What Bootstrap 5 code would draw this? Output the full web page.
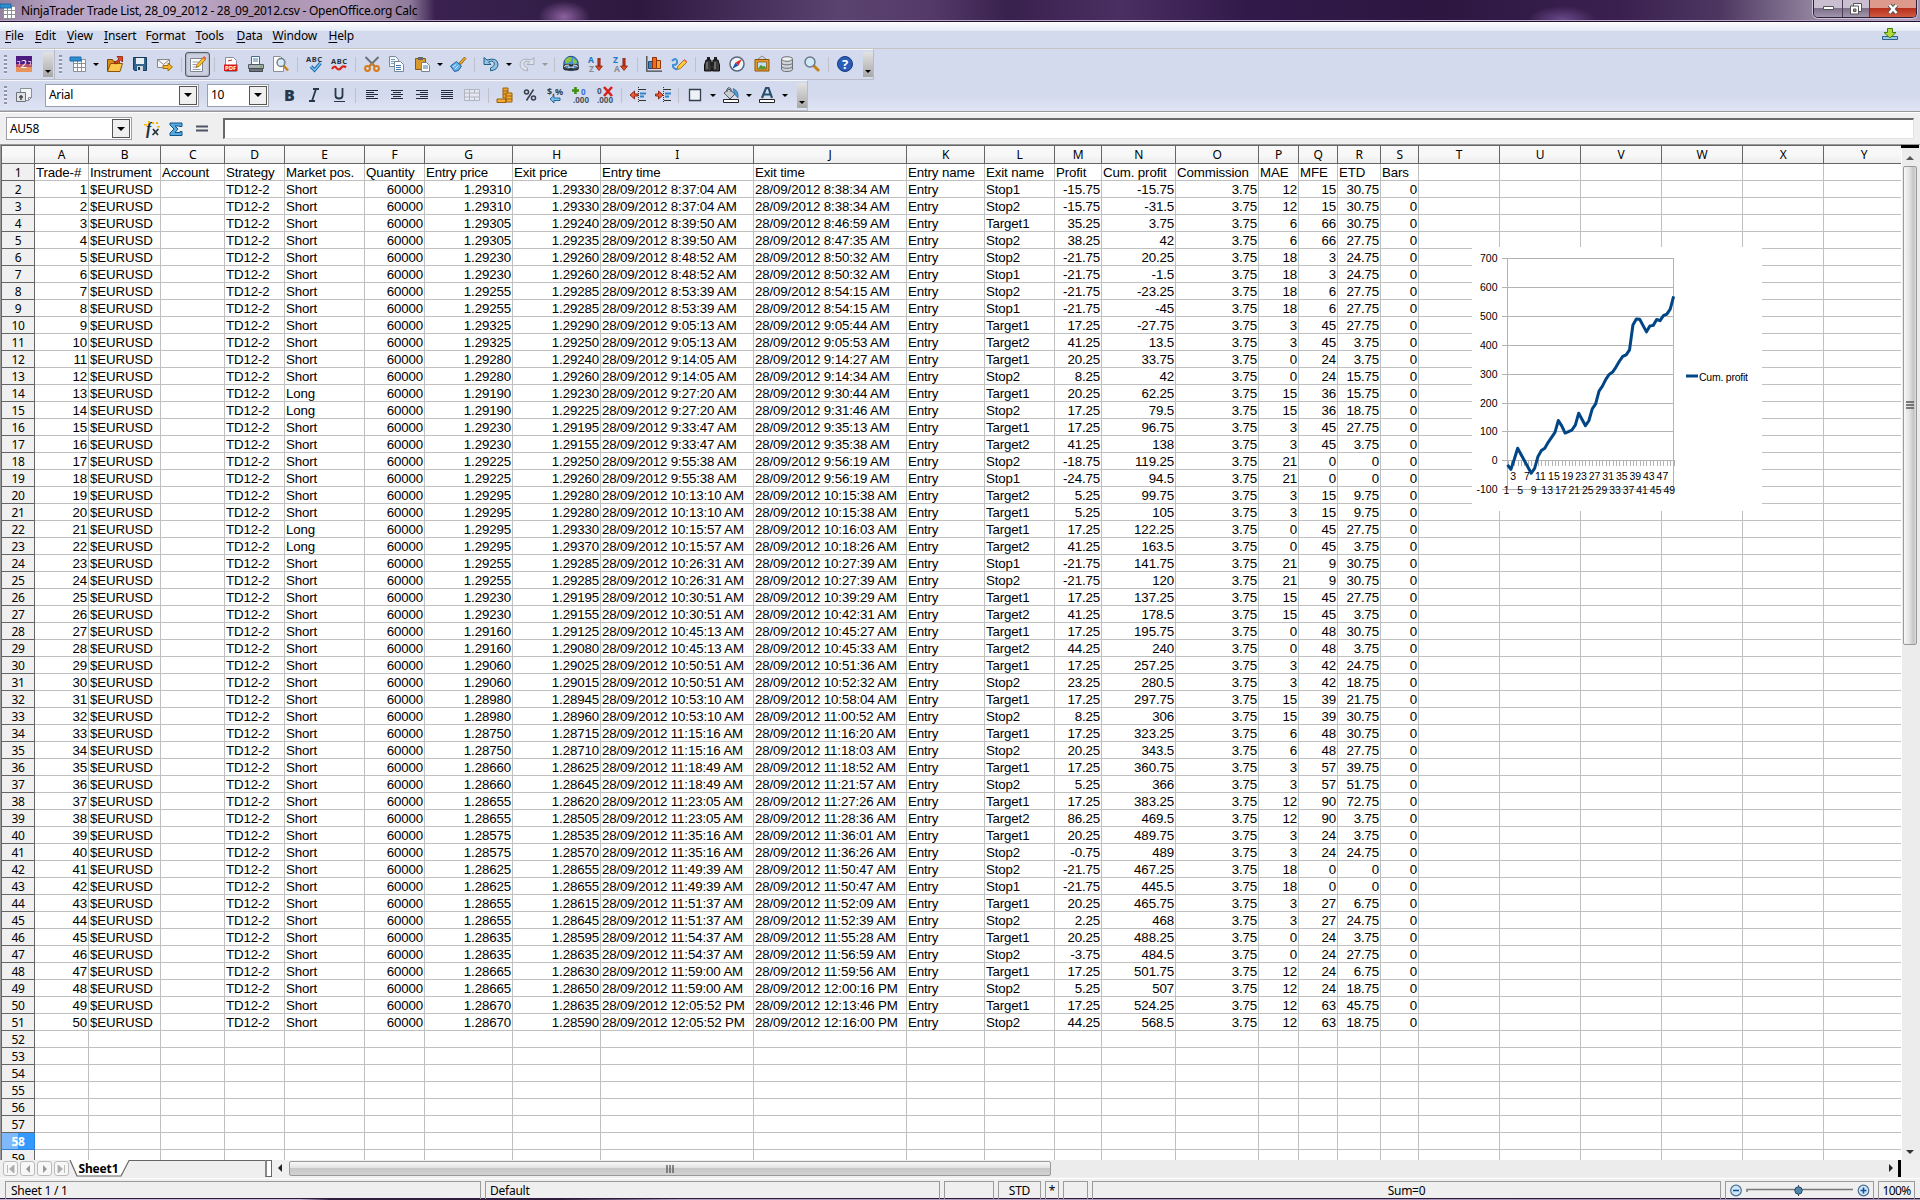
<!DOCTYPE html>
<html lang="en">
<head>
<meta charset="utf-8">
<title>NinjaTrader Trade List, 28_09_2012 - 28_09_2012.csv - OpenOffice.org Calc</title>
<link href="https://cdn.jsdelivr.net/npm/bootstrap@5.3.0/dist/css/bootstrap.min.css" rel="stylesheet">
<style>
html,body{height:1200px;overflow:hidden}
body{font:12px/16px "Noto Sans","Open Sans",sans-serif;color:#000;background:#efefef;width:1920px}
svg{display:block;overflow:visible}
.titlebar{height:22px;background:radial-gradient(ellipse 26px 16px at 564px 17px,#8d62a0,#8d62a000),radial-gradient(ellipse 34px 14px at 1562px 20px,#6a4a8c,#6a4a8c00),linear-gradient(90deg,#94809f 0,#b7a3c5 60px,#c3b0cb 170px,#a78fae 260px,#b79fbf 340px,#8f7a9a 410px,#3a2150 435px,#35204a 520px,#2e183f 640px,#5b4370 840px,#533a69 930px,#39214e 1010px,#4a2f62 1120px,#31194a 1250px,#2d1740 1440px,#3a2050 1620px,#4d3760 1720px,#8f809c 1810px,#b7a6c4 1910px,#a392b0 1920px);border-bottom:1px solid #1e1030;box-shadow:inset 0 -1px 0 #b9a4c8}
.titlebar .caption{letter-spacing:-.26px;line-height:21px;margin-left:5px}
.winbtns{width:104px;height:18px;border:1px solid #2c2038;border-top:0;border-radius:0 0 5px 5px;overflow:hidden;margin-right:3px;box-shadow:0 0 0 1px #cfc3d8}
.wb{height:17px;background:linear-gradient(#c9bfd0 0 50%,#7d7088 50%,#a397b0);border-right:1px solid #4b3d58}
.wb svg{margin:auto}
.wb-close{background:linear-gradient(#dd9a8c 0 50%,#b8301c 50%,#d05a40);border:0}
.menubar{height:27px;background:linear-gradient(#fff 0,#eef2fa 5px,#e5ebf6 9px,#d4daed 9px);border-bottom:1px solid #c4c4c4}
.menubar span{line-height:28px;white-space:nowrap;letter-spacing:-.15px}
.menubar u{text-underline-offset:1.5px}
.bars{height:62px;background:linear-gradient(#d4daed 0,#d4daed 46px,#dfe5f5)}
.tbar{height:31px;border-right:1px solid #b9bcc8;border-bottom:1px solid #b9bcc8;border-top:1px solid #f3f5fb;width:max-content;padding-bottom:1px}
.tbar .ic{width:25px;height:25px;display:flex;align-items:center;justify-content:center;flex:none}
.ic svg{width:16px;height:16px}
.ar{width:11px;flex:none;display:flex;justify-content:center}
.ar:before,.dn:before{content:"";border:3px solid transparent;border-top:3px solid #000;border-bottom:0}
.ar.off:before{border-top-color:#999}
.sp{width:8px;flex:none;display:flex;justify-content:center}
.sp:before{content:"";width:1px;height:15px;background:#bfc0c8}
.hd{width:3px;height:19px;background:repeating-linear-gradient(#8e93a5 0 2px,#e6eaf6 2px 4px);flex:none}
.more{width:10px;height:25px;background:linear-gradient(#e2e2e2,#a8a8a8);display:flex;align-items:flex-end;justify-content:center;padding-bottom:4px;flex:none}
.on{border:1px solid #555b66;border-radius:3px;background:#ccd1e2;box-shadow:inset 0 0 2px #777}
.combo{height:23px;border:1px solid #9c9fa8;background:#fff;display:flex;align-items:center;justify-content:space-between;padding:1px 1px 1px 3px;flex:none;letter-spacing:-.3px}
.combo .dn{width:18px;height:19px;border:1px solid #555;background:#efefef;display:flex;align-items:center;justify-content:center}
.combo .dn:before{border-width:4px 4px 0 4px}
.more:before{content:"";border:3px solid transparent;border-top:3px solid #000;border-bottom:0}
.fbar{height:34px;padding-top:1px;border-top:1px solid #999;box-shadow:inset 0 1px 0 #fff;border-bottom:1px solid #999}
.finput{height:21px;background:#fff;border:1px solid #e3e3e3;border-top:2px solid #696969;border-left:2px solid #696969;width:1691px}
.work{height:1015px}
.gridbox{width:1901px;height:1015px;overflow:hidden;position:relative;background:#fff;border-left:1px solid #999}
.sheet{table-layout:fixed;border-collapse:separate;border-spacing:0;font:13.3px/16px "Liberation Sans",Arial,sans-serif;letter-spacing:-.13px}
.sheet td,.sheet th{height:17px;padding:0 2px 0 1px;border-right:1px solid #c0c0c0;border-bottom:1px solid #c0c0c0;overflow:hidden;white-space:nowrap;font-weight:400}
.sheet td{padding-top:1px;line-height:15px}
.sheet .n{text-align:right;padding-right:1px}
.sheet th{font:12px/15px "Noto Sans","Open Sans",sans-serif;letter-spacing:-.4px;text-align:center;border-color:#666;background:#f0f0f0;padding:0}
.sheet thead th{height:19px;line-height:17px;border-top:1px solid #666;background:linear-gradient(#f8f8f8 0 50%,#ededed)}
.sheet th:first-child{border-left:1px solid #666}
.sheet th.cur{background:linear-gradient(90deg,#7db9fb 50%,#3399ff 50%);color:#fff;font-weight:700;border-color:#2a82dd}
.chart{position:absolute;left:1471px;top:102px;width:290px;height:264px;background:#fff}
.vs{width:19px;background:#ececec;border-left:1px solid #fff}
.vthumb{margin-left:1px;width:14px;height:479px;border:1px solid #999;border-radius:2px;background:linear-gradient(90deg,#f8f8f8,#dedede 50%,#c4c4c8 80%,#ddd)}
.tabs{height:18px}
.nv{width:15px;height:15px;border:1px solid #bbb;border-radius:3px;background:#f7f7f7;flex:none;margin:1px 2px 0 0;display:flex;align-items:center;justify-content:center}
.hthumb{width:762px;height:15px;margin-top:1px;border:1px solid #999;border-radius:2px;background:linear-gradient(#f8f8f8,#e2e2e2 45%,#c8c8c8 50%,#d2d2d2)}
.status{height:20px;border-top:1px solid #fff;padding:2px 0 0 5px}
.pane{height:18px;border:1px solid #9a9a9a;border-bottom:0;line-height:18px;padding-left:5px;flex:none;letter-spacing:-.25px;white-space:nowrap}
.strip{height:2px;border-top:1px solid #2d1c3d;background:linear-gradient(90deg,#c9b2d6 300px,#33203f 330px,#30203c 560px,#b39cc0 680px,#a591b3)}
</style>
<script src="https://cdn.jsdelivr.net/npm/bootstrap@5.3.0/dist/js/bootstrap.bundle.min.js"></script>
</head>
<body>
<svg width="0" height="0" class="position-absolute"><defs>
<g id="gridic"><path d="M3.500 3.500h12v12h-12z" fill="#fff" stroke="#8b9196"/><path d="M3 7.500h13M3 11.500h13M7.500 3v13M11.500 3v13" stroke="#8b9196"/><path d="M0 1h11v4H0z" fill="#2e8fd0" stroke="#1c6ba6"/></g>
<g id="page"><path d="M2.500 1.500h8l3 3v11h-11z" fill="#fff" stroke="#8a8f98"/></g>
<g id="down"><path d="M0 0v9" stroke="#7c1508" stroke-width="3"/><path d="M0 0v9" stroke="#e04a20"/><path d="M-3.500 8h7L0 12.500z" fill="#e04a20" stroke="#8c1c08" stroke-width=".8"/></g>
</defs></svg>

<div class="titlebar d-flex align-items-start">
  <svg width="16" height="16" viewBox="0 0 16 16" style="margin-top:3px"><use href="#gridic"/></svg>
  <span class="caption">NinjaTrader Trade List, 28_09_2012 - 28_09_2012.csv - OpenOffice.org Calc</span>
  <div class="winbtns d-flex ms-auto">
    <div class="wb d-flex" style="width:29px"><svg width="11" height="5"><path d="M.5.500h10v3H.5z" fill="#fff" stroke="#555"/></svg></div>
    <div class="wb d-flex" style="width:27px"><svg width="12" height="12"><path d="M3.500.5h8v8h-8z" fill="#fff" stroke="#555"/><path d="M.5 3h8v8h-8z" fill="#fff" stroke="#555"/><path d="M3.500 6h2.500v2.500H3.500z" fill="#998da5" stroke="#555"/></svg></div>
    <div class="wb wb-close d-flex flex-fill"><svg width="12" height="10"><path d="M2.500 1l7 8M9.500 1l-7 8" stroke="#555" stroke-width="4.500"/><path d="M2.500 1l7 8M9.500 1l-7 8" stroke="#fff" stroke-width="2.600"/></svg></div>
  </div>
</div>
<div class="menubar d-flex ps-1" id="menu"></div>
<div class="bars">
  <div class="d-flex">
  <div class="tbar d-flex align-items-center" style="width:55px">
    <i class="hd ms-1"></i>
    <span class="ic" style="margin-left:4px"><svg viewBox="0 0 16 16"><path d="M0 0h16v16H0z" fill="#4c1a80"/><path d="M0 11h16v5H0z" fill="#e8935a"/><path d="M0 8h16v3H0z" fill="#b8506c"/><text x="8" y="12" font-size="11" fill="#fff" text-anchor="middle">2</text><path d="M1 5.500h3l-1 4M12 5.500h3l-1 4" fill="none" stroke="#e9d8f2" stroke-width=".8"/></svg></span>
    <i class="more" style="margin-left:7px"></i>
  </div>
  <div class="tbar d-flex align-items-center" id="std"></div>
  </div>
  <div class="tbar d-flex align-items-center" id="fmt"></div>
</div>
<div class="fbar d-flex align-items-center">
  <div class="combo" style="width:126px;margin-left:6px">AU58<i class="dn"></i></div>
  <svg width="16" height="16" viewBox="0 0 16 16" style="margin-left:12px"><text x="2" y="13" font-family="Liberation Serif" font-style="italic" font-weight="700" font-size="16" fill="#26303c">f</text><path d="M9 8l5 6M14.500 8l-6 6" stroke="#26303c" stroke-width="1.700"/><g fill="#f5b800"><path d="M0 3h3v1.500H0zM4 0h2v2H4zM8 1h2v2H8zM12 1h2v2h-2zM13 5h3v1.500h-3z"/></g></svg>
  <svg width="16" height="16" viewBox="0 0 16 16" style="margin-left:8px"><path d="M2 2h12v3.500h-2.500V5H7l3 3-3 3.500h5V10.500H14V14.500H2V12l4-4-4-4z" fill="#55aadf" stroke="#12538c"/></svg>
  <svg width="12" height="8" style="margin-left:12px"><path d="M0 1.500h12M0 5.500h12" stroke="#4c5663" stroke-width="2"/></svg>
  <div class="finput" style="margin-left:15px"></div>
</div>
<div class="work d-flex">
  <div class="gridbox">
    <table class="sheet"><colgroup id="cg"></colgroup><thead><tr id="hdr"></tr></thead><tbody id="rows"></tbody></table>
    <svg class="chart" id="chart" viewBox="1472 247 290 264" font-family="Liberation Sans" font-size="10.500"></svg>
  </div>
  <div class="vs">
    <div style="height:3px;width:18px;background:#000;margin-left:-1px"></div>
    <svg width="14" height="18"><path d="M4 12h8l-4-4z" fill="#555"/></svg>
    <div class="vthumb d-flex align-items-center justify-content-center"><svg width="8" height="9"><path d="M0 1h8M0 4h8M0 7h8" stroke="#555" stroke-width="1.500"/></svg></div>
    <svg width="14" height="515"><path d="M4 505h8l-4 4z" fill="#333"/></svg>
  </div>
</div>
<div class="tabs d-flex" style="padding-left:3px">
  <i class="nv"><svg width="9" height="8"><path d="M1.500 0v8M8 0v8L3.500 4z" fill="#aaa" stroke="#aaa" stroke-width=".8"/></svg></i>
  <i class="nv"><svg width="6" height="8"><path d="M5 0v8L1 4z" fill="#999"/></svg></i>
  <i class="nv"><svg width="6" height="8"><path d="M1 0v8l4-4z" fill="#999"/></svg></i>
  <i class="nv"><svg width="9" height="8"><path d="M7.500 0v8M1 0v8l4.500-4z" fill="#aaa" stroke="#aaa" stroke-width=".8"/></svg></i>
  <svg width="195" height="17" style="margin-left:-1px;flex:none"><path d="M0 0l7 16h44L59 0z" fill="#fff"/><path d="M0 0l7 16h44L59 .5h136" fill="none" stroke="#666" stroke-width="1.200"/><text x="8.500" y="13" font-family="Noto Sans" font-weight="700" font-size="12" textLength="40">Sheet1</text></svg>
  <div style="width:7px;height:17px;border:1px solid #666;border-left:2px solid #888;background:#fff"></div>
  <svg width="17" height="16"><path d="M10 4v8l-4-4z" fill="#222"/></svg>
  <div class="hthumb d-flex align-items-center justify-content-center"><svg width="8" height="8"><path d="M1 0v8M4 0v8M7 0v8" stroke="#555" stroke-width="1.300"/></svg></div>
  <div class="flex-fill" style="background:#ececec;height:17px"></div>
  <svg width="12" height="16" style="background:#ececec"><path d="M2 4v8l4-4z" fill="#222"/></svg>
  <div style="width:3px;height:17px;background:#000;margin:0 19px 0 -1px"></div>
</div>
<div class="status d-flex">
  <div class="pane" style="width:476px;margin-right:4px">Sheet 1 / 1</div>
  <div class="pane" style="width:455px;margin-right:4px;padding-left:4px">Default</div>
  <div class="pane" style="width:50px;margin-right:4px"></div>
  <div class="pane text-center p-0" style="width:43px;margin-right:4px">STD</div>
  <div class="pane text-center p-0" style="width:14px;margin-right:4px">*</div>
  <div class="pane" style="width:25px;margin-right:4px"></div>
  <div class="pane text-center p-0" style="width:629px;margin-right:4px">Sum=0</div>
  <div class="pane p-0" style="width:149px;margin-right:4px"><svg width="147" height="17"><g stroke="#4d6f91" stroke-width="1.200"><circle cx="10" cy="8.500" r="5.300" fill="#cfe6fa"/><circle cx="137.500" cy="8.500" r="5.300" fill="#cfe6fa"/></g><path d="M7 8.500h6M134.500 8.500h6M137.500 5.500v6" stroke="#0f4f94" stroke-width="1.600"/><path d="M21 10V7.500h106" fill="none" stroke="#777" stroke-width="1.500"/><path d="M72.500 3v11" stroke="#444"/><circle cx="72.500" cy="8.500" r="3.700" fill="#4f86ad" stroke="#27465e"/></svg></div>
  <div class="pane text-center p-0" style="width:37px;letter-spacing:-.6px">100%</div>
</div>
<div class="strip"></div>

<script>
const $=id=>document.getElementById(id);
/* menu: label and the box width up to the next entry */
$('menu').innerHTML=[['<u>F</u>ile',30],['<u>E</u>dit',32],['<u>V</u>iew',37],['<u>I</u>nsert',41.5],['F<u>o</u>rmat',50],['<u>T</u>ools',41],['<u>D</u>ata',36],['<u>W</u>indow',56],['<u>H</u>elp',40]]
 .map(([t,w])=>`<span style="width:${w}px;padding-left:1px">${t}</span>`).join('')+
 '<svg width="16" height="13" style="margin:6px 22px 0 auto"><path d="M.5 8.500h15v3H.5z" fill="#9cc8e8" stroke="#2e6187"/><path d="M5.500.5h5v4h3.500L8 10 2 4.500h3.500z" fill="#b4d838" stroke="#3f7f10"/></svg>';

const clip='<path d="M1.500 2.500h10v11h-10z" fill="#d99a2b" stroke="#8a5a10"/><path d="M4 1h5v3H4z" fill="#666"/><path d="M7.500 6.500h5l3 3v6h-8z" fill="#fff" stroke="#7a828c"/><path d="M9 10h5M9 12h5" stroke="#3b78b5"/>';
const sortIc=(a,b,c1,c2)=>`<text x="0" y="7" font-size="8.500" font-weight="700" fill="${c1}">${a}</text><text x="1" y="16" font-size="8.500" font-weight="700" fill="${c2}">${b}</text><use href="#down" x="11" y="2"/>`;
const I={
 new:'<use href="#gridic"/>',
 open:'<path d="M.5 15V3.500h5l1 2h6V8" fill="#d98e1c" stroke="#7c4a06"/><path d="M.5 15.500l3-8h12l-2.500 8z" fill="#fcc94e" stroke="#8a5608"/><path d="M7 7l5-4-2-2.500h5.500V6L13.500 4 9 8z" fill="#e4481e" stroke="#8e1c06" stroke-width=".8"/>',
 save:'<path d="M1.500 1.500h13v13h-12l-1-1z" fill="#33658f" stroke="#173a59"/><path d="M4 2h8v6H4z" fill="#e8eef4"/><path d="M5 10h6v5H5z" fill="#cfd8e0"/><path d="M6 11h2v3H6z" fill="#173a59"/>',
 mail:'<path d="M.5 3.500h12v8H.5z" fill="#f4f4f4" stroke="#888"/><path d="M.5 3.500l6 5 6-5" fill="none" stroke="#888"/><path d="M6 9.500h5V7l4.500 4-4.500 4v-2.500H6z" fill="#f5b52a" stroke="#9a6208" stroke-width=".9"/>',
 edit:'<path d="M.5 2.500h12v13H.5z" fill="#fff" stroke="#7d8690"/><path d="M2.500 6h6M2.500 8.500h4M2.500 11h4M2.500 13.500h8" stroke="#8aa0b4"/><path d="M6 11.500l1-3 6-7 2.500 2-6.500 7z" fill="#fbc02d" stroke="#8f5f0a" stroke-width=".8"/><path d="M12.500 1.500l1.500-1.500 2.500 2-1.500 1.800z" fill="#e65b5b"/>',
 pdf:'<use href="#page"/><path d="M1 8.500h13.500V15H1z" fill="#d8171b"/><text x="2" y="14.300" font-size="6" font-weight="700" fill="#fff">PDF</text><path d="M5 5l4-1" stroke="#d8171b"/>',
 print:'<path d="M3.500.5h8v8h-8z" fill="#fff" stroke="#44698c"/><path d="M5 3h5M5 5h5" stroke="#3d7fbb"/><path d="M.5 8.500h15v4H.5z" fill="#aab0b6" stroke="#555b62"/><path d="M1.500 12.500h13v3h-13z" fill="#6d747c" stroke="#44494f"/><path d="M12 10.500h2" stroke="#54c51c" stroke-width="1.500"/>',
 preview:'<path d="M.5.5h7l3 3v12H.5z" fill="#fff" stroke="#8a8f98"/><path d="M10 9l5 5.500" stroke="#c48618" stroke-width="2.500"/><circle cx="8" cy="6.500" r="4" fill="#cfe6f7cc" stroke="#6b7782" stroke-width="1.300"/>',
 spell:'<text x="0" y="6" font-size="7.500" font-weight="700" fill="#26313c" textLength="16">ABC</text><path d="M5 10.500l3.500 3.500 6-7" fill="none" stroke="#1660a4" stroke-width="3.400"/><path d="M5 10.500l3.500 3.500 6-7" fill="none" stroke="#6bc0f4" stroke-width="1.600"/>',
 auto:'<text x="0" y="8" font-size="7.500" font-weight="700" fill="#26313c" textLength="16">ABC</text><path d="M1 13q2.500-4 4.500-1t4.500 0 5-.5" fill="none" stroke="#dc2217" stroke-width="2.200"/>',
 cut:'<path d="M1.500 1l9 9M14.500 1l-9 9" stroke="#6a7179" stroke-width="2"/><circle cx="3.500" cy="12.500" r="2.400" fill="none" stroke="#d97a12" stroke-width="2"/><circle cx="12.500" cy="12.500" r="2.400" fill="none" stroke="#d97a12" stroke-width="2"/><path d="M6 9l2-1 2 1" stroke="#d97a12" stroke-width="2" fill="none"/>',
 copy:'<path d="M.5.500h6l3 3v7h-9z" fill="#f4f7fa" stroke="#7a8796"/><path d="M2 3.500h4M2 5.500h4M2 7.500h4" stroke="#6ea0d0"/><path d="M5.500 5.500h6l3 3v7h-9z" fill="#fff" stroke="#7a8796"/><path d="M7 9.500h5M7 11.500h5M7 13.500h5" stroke="#3b78b5"/>',
 paste:clip,
 brush:'<path d="M9 7l5.500-6 1.500 1.500L11 8.500z" fill="#e9a826" stroke="#8a5a10" stroke-width=".8"/><path d="M.5 10l6-4.500 5 4.500-3 4.500-4 1z" fill="#63b0ea" stroke="#215f97"/><path d="M3 11l3-2.500M5 13l3-3" stroke="#d5ecfb"/>',
 undo:'<path d="M1 1.500v7h7L5.500 6Q9.500 4 11 6.800T7.500 12v2.800Q15 14 15 8 14 1 4 4z" fill="#8fc4e2" stroke="#1f5e86"/>',
 redo:'<path d="M15 1.500v7H8L10.500 6Q6.500 4 5 6.800T8.500 12v2.800Q1 14 1 8 2 1 12 4z" fill="#dde1ea" stroke="#a9afba"/>',
 link:'<circle cx="8" cy="7.500" r="7.200" fill="#4a90d0" stroke="#1d4d7c"/><path d="M2 4q3-4 7-2.500l-1 4-5 2zM10 2l4 3-1 3-3-1z" fill="#8cc43c"/><rect x="1" y="9" width="7" height="4.500" rx="2.200" fill="none" stroke="#333" stroke-width="2"/><rect x="8" y="9" width="7" height="4.500" rx="2.200" fill="none" stroke="#333" stroke-width="2"/><path d="M1.500 11.200q0-2 2.500-2h2M10 9.200h2q2.500 0 2.500 2M5 11.200h6" stroke="#eee" fill="none"/>',
 az:sortIc('A','Z','#1c77c3','#8a8f96'), za:sortIc('Z','A','#1c77c3','#8a8f96'),
 bar:'<path d="M.8 0v15.200H16" fill="none" stroke="#444" stroke-width="1.300"/><path d="M2.500 5.500h4v7h-4z" fill="#3f82b8" stroke="#1a4c76"/><path d="M6.500 1.500h4v11h-4z" fill="#f26a1c" stroke="#8f3205"/><path d="M10.500 4.500h4v8h-4z" fill="#f9a33b" stroke="#8f3205"/>',
 draw:'<path d="M1 5q4-4 5 0t-4 4q-1 3 4 4.500" fill="none" stroke="#3f8fd4" stroke-width="2"/><path d="M6 13.500l1-3.500 6-6 2.500 2.500-6 6z" fill="#fbca3c" stroke="#8f5f0a" stroke-width=".8"/><path d="M12.500 4l1-1 2.800 2.500-1 1z" fill="#e26a6a"/>',
 find:'<path d="M3 1h3v3H3zM10 1h3v3h-3z" fill="#222"/><path d="M2 4h5l.5 11H.5V9zM9 4h5l1.500 5v6H8.500z" fill="#3b3b3b" stroke="#111"/><path d="M6 6h4v4H6z" fill="#222"/><path d="M3 6v7M11 6v7" stroke="#999"/>',
 nav:'<circle cx="8" cy="8" r="7" fill="#eef5fb" stroke="#5a6a7a" stroke-width="1.500"/><path d="M13 3L6.500 6.500 9.500 9.500z" fill="#e32a1a"/><path d="M3 13l3.500-6.500 3 3z" fill="#2158b4"/>',
 gal:'<path d="M4 3l4-3 4 3" fill="none" stroke="#888"/><path d="M1 3.500h14v11.500H1z" fill="#e79a2c" stroke="#8a5208"/><path d="M3.500 6h9v7h-9z" fill="#bfe0f6" stroke="#7a5010" stroke-width=".7"/><path d="M4 12.700l3-4 2 2 1.500-1 2 3z" fill="#4d9424"/>',
 db:'<path d="M2.500 3v10q0 2.500 5.500 2.500t5.500-2.500V3" fill="#d0d4d8" stroke="#6c7278"/><ellipse cx="8" cy="3" rx="5.500" ry="2.300" fill="#eef0f2" stroke="#6c7278"/><path d="M2.500 6.500q0 2.300 5.500 2.300t5.500-2.300M2.500 10q0 2.300 5.500 2.300t5.500-2.300" fill="none" stroke="#6c7278"/>',
 zoom:'<path d="M9.500 9.500l5.500 5.500" stroke="#c7821a" stroke-width="3"/><circle cx="6" cy="6" r="5" fill="#cfe8fa" stroke="#6b7a88" stroke-width="1.500"/>',
 help:'<circle cx="8" cy="8" r="7.500" fill="#2a5db8" stroke="#123a80"/><text x="8" y="12.700" text-anchor="middle" font-size="13" font-weight="700" fill="#fff">?</text>',
 styles:'<path d="M4.500 1.500h11v9l-3 3h-8z" fill="#f2f4f6" stroke="#8a9098"/><path d="M.5 5.500h9v9h-9z" fill="#dfe3e8" stroke="#6d747c"/><path d="M3 10h4M5 8v5" stroke="#444" stroke-width="1.500"/><path d="M15.500 10.500h-3v3" fill="none" stroke="#8a9098"/>',
 b:'<text x="3" y="13.500" font-family="Open Sans" font-size="16" font-weight="800" fill="#26384a">B</text>',
 i:'<path d="M7 2h6M3 14h6M10 2L6 14" stroke="#26384a" stroke-width="1.800"/>',
 u:'<path d="M4.500 1v7.500q0 3 3.500 3t3.500-3V1" fill="none" stroke="#26384a" stroke-width="1.800"/><path d="M3 14.500h11" stroke="#26384a"/>',
 coin:'<path d="M6 1h5v10H6z" fill="#f0a730" stroke="#9a5f0a"/><path d="M9 6h6v9H9zM0 12h9v3.500H0z" fill="#f4ad35" stroke="#9a5f0a"/><path d="M6 4h5M6 7h3M9 9h6M9 12h6" stroke="#9a5f0a"/>',
 pct:'<g fill="none" stroke="#333f4b" stroke-width="1.500"><circle cx="4.500" cy="5" r="2"/><circle cx="11.500" cy="11" r="2"/><path d="M11.500 2.500L4.500 13.500"/></g>',
 std:'<text x="0" y="7.500" font-size="9" font-weight="700" fill="#333f4b" textLength="16">$,%</text><path d="M3 12l4-3.500V11h6v2.500H7V16z" fill="#7ac3ee" stroke="#1b5e92" stroke-width=".9"/>',
 add:'<path d="M0 3.500h7M3.500 0v7" stroke="#3f8f14" stroke-width="2.600"/><text x="9" y="8" font-size="8" font-weight="700" fill="#3a6fd8">0</text><text x="1" y="16" font-size="8" font-weight="700" fill="#4a5560">.000</text>',
 del:'<text x="0" y="7" font-size="8" font-weight="700" fill="#4a5560">0</text><text x="0" y="16" font-size="8" font-weight="700" fill="#4a5560">.000</text><path d="M7 0l8 9M15 0L7 9" stroke="#d8201a" stroke-width="2.600"/>',
 box:'<path d="M2.500 2.500h11v11h-11z" fill="#eef1f8" stroke="#333f4b" stroke-width="1.300"/>',
 fill:'<path d="M1 6l5-4 6 5-5 5z" fill="#c8ccd2" stroke="#4d555e"/><path d="M4 5V2q2-3 4 0v3" fill="none" stroke="#4d555e"/><path d="M10 1.500q6 2 5 9.500l-3.500-4z" fill="#4a9bd8" stroke="#1f5e86" stroke-width=".6"/><path d="M.5 12.500h15v3H.5z" fill="#fff" stroke="#222"/>',
 fc:'<path d="M3 11L7 1h2.500l3.500 10M5 7.500h6.500" fill="none" stroke="#26506e" stroke-width="2.200"/><path d="M.5 12.500h15v3H.5z" fill="#fff" stroke="#222"/>',
 merge:'<path d="M.5 2.500h15v11H.5z" fill="#e4e7f0" stroke="#b0b4c0"/><path d="M0 6h16M0 10h16M5.500 2v11M10.500 2v4M10.500 10v4" stroke="#b0b4c0"/>'
};
const al=(a)=>'<g stroke="#222c38" stroke-width="1">'+a.map(([x,w],k)=>`<path d="M${x} ${3.5+k*2}h${w}"/>`).join('')+'</g>';
I.al=al([[2,12],[2,8],[2,12],[2,8],[2,12]]);I.ac=al([[2,12],[4,8],[2,12],[4,8],[2,12]]);
I.arr=al([[2,12],[6,8],[2,12],[6,8],[2,12]]);I.aj=al([[2,12],[2,12],[2,12],[2,12],[2,12]]);
const ind=p=>`<path d="M8.500 0v16" stroke="#333" stroke-dasharray="1 1"/><path d="M9 2.500h7M9 13.500h7" stroke="#333"/><path d="M10 6.500h6M10 9.500h4" stroke="#2f86cc" stroke-width="2"/><path d="${p}" fill="#e8603a" stroke="#8c1c08" stroke-width=".9"/>`;
I.dec=ind('M0 8l4.500-4V7H8v2H4.500v3z');I.inc=ind('M8 8L3.500 4V7H.5v2h3v3z');
const bar=s=>s.split(' ').map(k=>k=='|'?'<i class="sp"></i>':k=='v'?'<i class="ar"></i>':k=='V'?'<i class="ar" style="width:12px"></i>':k=='x'?'<i class="ar off"></i>':`<span class="ic${k=='edit'?' on':''}"><svg viewBox="0 0 16 16">${I[k]}</svg></span>`).join('');
$('std').innerHTML='<i class="hd" style="margin-left:4px;margin-right:3px"></i>'+bar('new V open save mail | edit | pdf print preview | spell auto | cut copy paste v brush | undo v redo x | link az za | bar draw | find nav gal db zoom | help')+'<i class="more" style="margin-left:6px"></i>';
$('fmt').innerHTML='<i class="hd ms-1" style="margin-right:4px"></i>'+bar('styles')+'<div class="combo" style="width:154px;margin-left:9px">Arial<i class="dn"></i></div><div class="combo" style="width:62px;margin:0 7px 0 8px">10<i class="dn"></i></div>'+bar('b i u | al ac arr aj merge | coin pct std add del | dec inc')+'<i class="sp" style="width:7px"></i>'+bar('box v fill v fc v')+'<i class="more" style="margin-left:7px"></i>';

/* pos | entry px | exit px | entry time | exit time | exit name | profit | cum | MAE | MFE | ETD */
const raw=`S 310 330 8:37:04 8:38:34 Stop1 -15.75 -15.75 12 15 30.75
S 310 330 8:37:04 8:38:34 Stop2 -15.75 -31.5 12 15 30.75
S 305 240 8:39:50 8:46:59 Target1 35.25 3.75 6 66 30.75
S 305 235 8:39:50 8:47:35 Stop2 38.25 42 6 66 27.75
S 230 260 8:48:52 8:50:32 Stop2 -21.75 20.25 18 3 24.75
S 230 260 8:48:52 8:50:32 Stop1 -21.75 -1.5 18 3 24.75
S 255 285 8:53:39 8:54:15 Stop2 -21.75 -23.25 18 6 27.75
S 255 285 8:53:39 8:54:15 Stop1 -21.75 -45 18 6 27.75
S 325 290 9:05:13 9:05:44 Target1 17.25 -27.75 3 45 27.75
S 325 250 9:05:13 9:05:53 Target2 41.25 13.5 3 45 3.75
S 280 240 9:14:05 9:14:27 Target1 20.25 33.75 0 24 3.75
S 280 260 9:14:05 9:14:34 Stop2 8.25 42 0 24 15.75
L 190 230 9:27:20 9:30:44 Target1 20.25 62.25 15 36 15.75
L 190 225 9:27:20 9:31:46 Stop2 17.25 79.5 15 36 18.75
S 230 195 9:33:47 9:35:13 Target1 17.25 96.75 3 45 27.75
S 230 155 9:33:47 9:35:38 Target2 41.25 138 3 45 3.75
S 225 250 9:55:38 9:56:19 Stop2 -18.75 119.25 21 0 0
S 225 260 9:55:38 9:56:19 Stop1 -24.75 94.5 21 0 0
S 295 280 10:13:10 10:15:38 Target2 5.25 99.75 3 15 9.75
S 295 280 10:13:10 10:15:38 Target1 5.25 105 3 15 9.75
L 295 330 10:15:57 10:16:03 Target1 17.25 122.25 0 45 27.75
L 295 370 10:15:57 10:18:26 Target2 41.25 163.5 0 45 3.75
S 255 285 10:26:31 10:27:39 Stop1 -21.75 141.75 21 9 30.75
S 255 285 10:26:31 10:27:39 Stop2 -21.75 120 21 9 30.75
S 230 195 10:30:51 10:39:29 Target1 17.25 137.25 15 45 27.75
S 230 155 10:30:51 10:42:31 Target2 41.25 178.5 15 45 3.75
S 160 125 10:45:13 10:45:27 Target1 17.25 195.75 0 48 30.75
S 160 080 10:45:13 10:45:33 Target2 44.25 240 0 48 3.75
S 060 025 10:50:51 10:51:36 Target1 17.25 257.25 3 42 24.75
S 060 015 10:50:51 10:52:32 Stop2 23.25 280.5 3 42 18.75
S 8980 8945 10:53:10 10:58:04 Target1 17.25 297.75 15 39 21.75
S 8980 8960 10:53:10 11:00:52 Stop2 8.25 306 15 39 30.75
S 8750 8715 11:15:16 11:16:20 Target1 17.25 323.25 6 48 30.75
S 8750 8710 11:15:16 11:18:03 Stop2 20.25 343.5 6 48 27.75
S 8660 8625 11:18:49 11:18:52 Target1 17.25 360.75 3 57 39.75
S 8660 8645 11:18:49 11:21:57 Stop2 5.25 366 3 57 51.75
S 8655 8620 11:23:05 11:27:26 Target1 17.25 383.25 12 90 72.75
S 8655 8505 11:23:05 11:28:36 Target2 86.25 469.5 12 90 3.75
S 8575 8535 11:35:16 11:36:01 Target1 20.25 489.75 3 24 3.75
S 8575 8570 11:35:16 11:36:26 Stop2 -0.75 489 3 24 24.75
S 8625 8655 11:49:39 11:50:47 Stop2 -21.75 467.25 18 0 0
S 8625 8655 11:49:39 11:50:47 Stop1 -21.75 445.5 18 0 0
S 8655 8615 11:51:37 11:52:09 Target1 20.25 465.75 3 27 6.75
S 8655 8645 11:51:37 11:52:39 Stop2 2.25 468 3 27 24.75
S 8635 8595 11:54:37 11:55:28 Target1 20.25 488.25 0 24 3.75
S 8635 8635 11:54:37 11:56:59 Stop2 -3.75 484.5 0 24 27.75
S 8665 8630 11:59:00 11:59:56 Target1 17.25 501.75 12 24 6.75
S 8665 8650 11:59:00 12:00:16 Stop2 5.25 507 12 24 18.75
S 8670 8635 12:05:52 12:13:46 Target1 17.25 524.25 12 63 45.75
S 8670 8590 12:05:52 12:16:00 Stop2 44.25 568.5 12 63 18.75`.split('\n').map(l=>l.split(' '));
const px=p=>'1.2'+(p.length==3?'9':'')+p, tm=t=>'28/09/2012 '+t+(t.startsWith('12')?' PM':' AM');
const edges=[0,34,88,160,224,284,364,424,512,600,753,906,984,1054,1101,1175,1258,1298,1337,1380,1418,1499,1580,1661,1742,1823,1904];
$('cg').innerHTML=edges.slice(1).map((e,k)=>`<col style="width:${e-edges[k]}px">`).join('');
document.querySelector('.sheet').style.width=edges.at(-1)+'px';
$('hdr').innerHTML='<th></th>'+[...'ABCDEFGHIJKLMNOPQRSTUVWXY'].map(c=>`<th>${c}</th>`).join('');
const heads=['Trade-#','Instrument','Account','Strategy','Market pos.','Quantity','Entry price','Exit price','Entry time','Exit time','Entry name','Exit name','Profit','Cum. profit','Commission','MAE','MFE','ETD','Bars'];
const num=[0,5,6,7,12,13,14,15,16,17,18];
let h='';
for(let r=1;r<=59;r++){
  let c=[];
  if(r==1)c=heads;
  else if(r<=51){const d=raw[r-2];c=[r-1,'$EURUSD','','TD12-2',d[0]=='S'?'Short':'Long','60000',px(d[1]),px(d[2]),tm(d[3]),tm(d[4]),'Entry',d[5],d[6],d[7],'3.75',d[8],d[9],d[10],'0'];}
  h+=`<tr><th${r==58?' class="cur"':''}>${r}</th>`;
  for(let k=0;k<25;k++)h+=`<td${r>1&&num.includes(k)?' class="n"':''}>${c[k]??''}</td>`;
  h+='</tr>';
}
$('rows').innerHTML=h;

/* line chart of cumulative profit */
const X=n=>1507.5+(n-1)*3.39, Y=v=>460.3-v*.2883;
let s='';
for(let v=-100;v<=700;v+=100){const y=Math.round(Y(v))+.5;s+=`<path d="M1502 ${y}H1674" stroke="#b3b3b3"/><text x="1497.500" y="${y+3}" text-anchor="end">${v}</text>`;}
s+='<path d="M1507.500 258V489M1673.500 258V489" stroke="#b3b3b3"/>';
for(let n=1;n<=50;n++)s+=`<path d="M${Math.round(X(n))+.5} 460v6" stroke="#b3b3b3"/>`;
for(let n=1;n<50;n+=2)s+=`<text x="${X(n)-1}" y="${n%4==3?480:494}" text-anchor="middle">${n}</text>`;
s+=`<polyline fill="none" stroke="#004586" stroke-width="3" stroke-linejoin="round" points="${raw.map((d,k)=>X(k+1)+','+Y(+d[7])).join(' ')}"/>`;
s+='<path d="M1686 376h12" stroke="#004586" stroke-width="3"/><text x="1699" y="381" textLength="49">Cum. profit</text>';
$('chart').innerHTML=s;
</script>
</body>
</html>
